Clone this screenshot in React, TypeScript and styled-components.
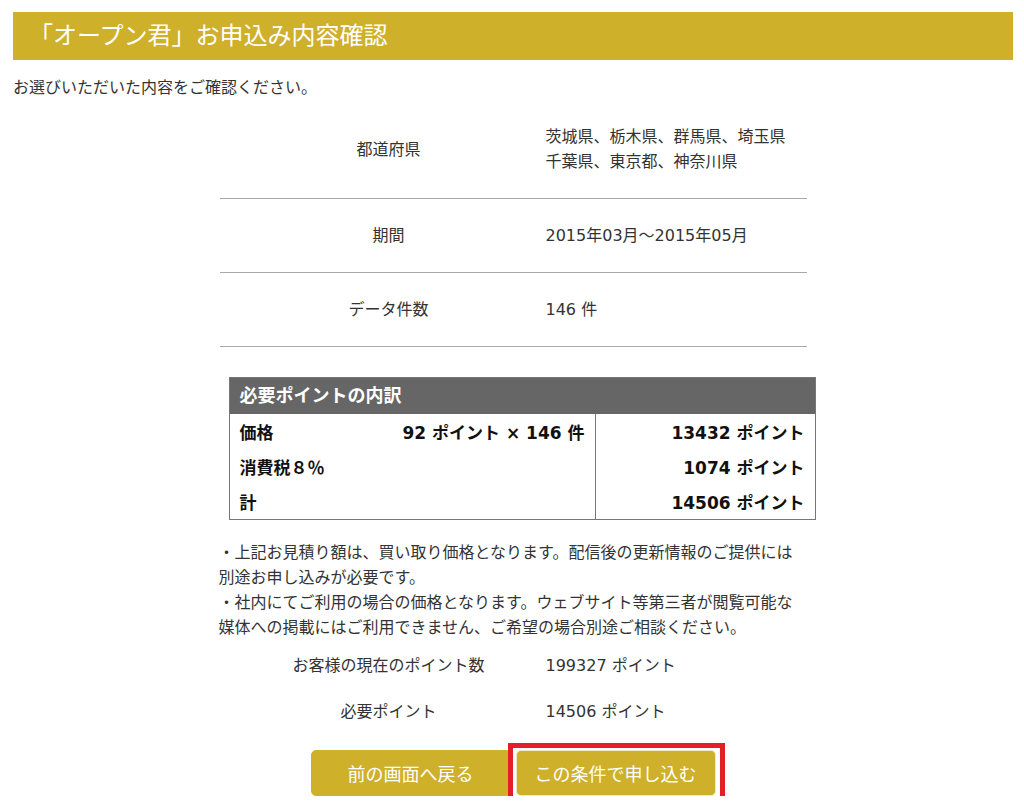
import React from "react";
import styled, { createGlobalStyle } from "styled-components";

const GlobalStyle = createGlobalStyle`
  body {
    margin: 0;
    background: #fff;
    color: #333;
    font-family: "DejaVu Sans", "Noto Sans CJK JP", sans-serif;
    font-size: 16px;
  }
`;

const gold = "#cfb02b";

const Page = styled.div`
  width: 1000px;
  margin: 0 11px 0 13px;
  padding-top: 12px;
`;

const TitleBar = styled.h1`
  margin: 0;
  height: 48px;
  padding-left: 16px;
  background: ${gold};
  color: #fff;
  font-size: 24px;
  font-weight: normal;
  line-height: 48px;
`;

const Lead = styled.p`
  margin: 15px 0 0;
  line-height: 25px;
`;

const Content = styled.div`
  width: 587px;
  margin: 0 auto;
`;

const InfoRow = styled.div<{ $plain?: boolean }>`
  display: grid;
  grid-template-columns: 326px 1fr;
  align-items: center;
  line-height: 25px;
  padding: ${p => (p.$plain ? "10px 0 11px" : "24px 0")};
  border-bottom: ${p => (p.$plain ? "none" : "1px solid #a8a8a8")};
`;

const InfoLabel = styled.div`
  padding-left: 12px;
  text-align: center;
`;

const InfoValue = styled.div``;

const Breakdown = styled.div`
  width: 587px;
  box-sizing: border-box;
  margin: 30px 0 0 9px;
  border: 1px solid #777;
  color: #111;
  font-size: 17px;
  font-weight: bold;
`;

const BreakdownHead = styled.div`
  height: 36px;
  padding-left: 10px;
  background: #666;
  color: #fff;
  font-size: 18px;
  line-height: 36px;
`;

const BreakdownBody = styled.div`
  display: grid;
  grid-template-columns: 366px 1fr;
  grid-auto-rows: 35px;
`;

const Cell = styled.div<{ $left?: boolean }>`
  display: flex;
  align-items: center;
  justify-content: ${p => (p.$left ? "space-between" : "flex-end")};
  padding: 0 10px 0 10px;
  border-right: ${p => (p.$left ? "1px solid #777" : "none")};
`;

const Notes = styled.p`
  margin: 20px 0 0 -1px;
  line-height: 25px;
`;

const Points = styled.div`
  margin-top: 3px;
`;

const ButtonRow = styled.div`
  display: flex;
  justify-content: center;
  gap: 5px;
  margin-top: 15px;
`;

const Button = styled.button<{ $active?: boolean }>`
  width: 200px;
  height: 46px;
  box-sizing: border-box;
  border: 1px solid ${p => (p.$active ? "#efe6c4" : gold)};
  border-radius: 5px;
  background: ${gold};
  color: #fff;
  font-family: inherit;
  font-size: 18px;
  cursor: pointer;
`;

const Highlight = styled.div`
  position: relative;
  &::after {
    content: "";
    position: absolute;
    left: -8px;
    right: -9px;
    top: -7px;
    bottom: -10px;
    border: 5px solid #e3202a;
    pointer-events: none;
  }
`;

const rows = [
  { label: "価格", calc: "92 ポイント × 146 件", total: "13432 ポイント" },
  { label: "消費税８％", calc: "", total: "1074 ポイント" },
  { label: "計", calc: "", total: "14506 ポイント" },
];

export default function App() {
  return (
    <>
      <GlobalStyle />
      <Page>
        <TitleBar>「オープン君」お申込み内容確認</TitleBar>
        <Lead>お選びいただいた内容をご確認ください。</Lead>
        <Content>
          <InfoRow>
            <InfoLabel>都道府県</InfoLabel>
            <InfoValue>
              茨城県、栃木県、群馬県、埼玉県
              <br />
              千葉県、東京都、神奈川県
            </InfoValue>
          </InfoRow>
          <InfoRow>
            <InfoLabel>期間</InfoLabel>
            <InfoValue>2015年03月～2015年05月</InfoValue>
          </InfoRow>
          <InfoRow>
            <InfoLabel>データ件数</InfoLabel>
            <InfoValue>146 件</InfoValue>
          </InfoRow>

          <Breakdown>
            <BreakdownHead>必要ポイントの内訳</BreakdownHead>
            <BreakdownBody>
              {rows.map(r => (
                <React.Fragment key={r.label}>
                  <Cell $left>
                    <span>{r.label}</span>
                    <span>{r.calc}</span>
                  </Cell>
                  <Cell>{r.total}</Cell>
                </React.Fragment>
              ))}
            </BreakdownBody>
          </Breakdown>

          <Notes>
            ・上記お見積り額は、買い取り価格となります。配信後の更新情報のご提供には
            <br />
            別途お申し込みが必要です。
            <br />
            ・社内にてご利用の場合の価格となります。ウェブサイト等第三者が閲覧可能な
            <br />
            媒体への掲載にはご利用できません、ご希望の場合別途ご相談ください。
          </Notes>

          <Points>
            <InfoRow $plain>
              <InfoLabel>お客様の現在のポイント数</InfoLabel>
              <InfoValue>199327 ポイント</InfoValue>
            </InfoRow>
            <InfoRow $plain>
              <InfoLabel>必要ポイント</InfoLabel>
              <InfoValue>14506 ポイント</InfoValue>
            </InfoRow>
          </Points>

          <ButtonRow>
            <Button>前の画面へ戻る</Button>
            <Highlight>
              <Button $active>この条件で申し込む</Button>
            </Highlight>
          </ButtonRow>
        </Content>
      </Page>
    </>
  );
}
